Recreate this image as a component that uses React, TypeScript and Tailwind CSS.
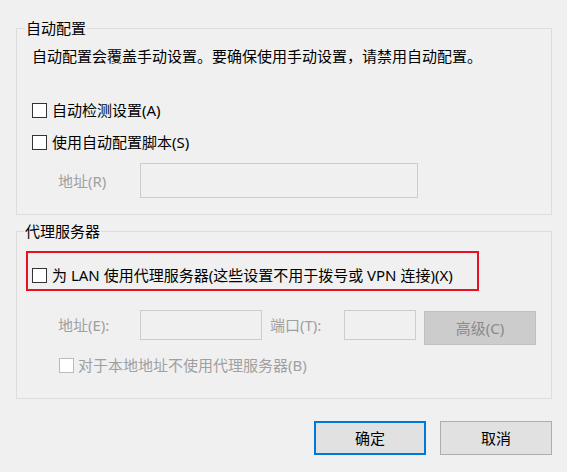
const font = { fontFamily: '"Noto Sans", "Noto Sans CJK SC", sans-serif' };

interface CheckProps {
  label: string;
  disabled?: boolean;
}

const Check = ({ label, disabled }: CheckProps) => (
  <div className="flex items-center h-[20px]">
    <span
      className={
        disabled
          ? "w-[15px] h-[15px] bg-white border border-[#bcbcbc] shrink-0"
          : "w-[15px] h-[15px] bg-white border border-[#333333] shrink-0"
      }
    />
    <span className={disabled ? "ml-[4px] text-[#a0a0a0]" : "ml-[5px] text-black"}>{label}</span>
  </div>
);

export default function App() {
  return (
    <div
      className="w-[567px] h-[472px] bg-[#f0f0f0] pt-[18px] pl-[16px] text-[15px] leading-[20px] text-black overflow-hidden"
      style={font}
    >
      {/* 自动配置 */}
      <fieldset className="w-[536px] border border-[#dcdcdc] pl-[15px] pb-[16px]">
        <legend className="-ml-[7px] px-[1px] leading-[20px]">自动配置</legend>
        <p className="mt-[8px]">自动配置会覆盖手动设置。要确保使用手动设置，请禁用自动配置。</p>
        <div className="mt-[34px]">
          <Check label="自动检测设置(A)" />
        </div>
        <div className="mt-[12px]">
          <Check label="使用自动配置脚本(S)" />
        </div>
        <div className="mt-[11px] flex items-center">
          <span className="ml-[26px] w-[82px] text-[#a0a0a0]">地址(R)</span>
          <div className="w-[278px] h-[35px] border border-[#cccccc] bg-[#f0f0f0]" />
        </div>
      </fieldset>

      {/* 代理服务器 */}
      <fieldset className="mt-[6px] w-[536px] border border-[#dcdcdc] pl-[15px] pb-[23px]">
        <legend className="-ml-[8px] px-[1px] leading-[20px]">代理服务器</legend>
        <div className="mt-[10px] -ml-[6px] w-[453px] h-[40px] border-2 border-[#e81123] pl-[4px] pt-[12px]">
          <Check label="为 LAN 使用代理服务器(这些设置不用于拨号或 VPN 连接)(X)" />
        </div>
        <div className="mt-[19px] flex items-start">
          <span className="ml-[26px] mt-[5px] w-[82px] text-[#a0a0a0]">地址(E):</span>
          <div className="w-[122px] h-[30px] border border-[#cccccc] bg-[#f0f0f0]" />
          <span className="ml-[8px] mt-[5px] w-[74px] text-[#a0a0a0]">端口(T):</span>
          <div className="w-[72px] h-[30px] border border-[#cccccc] bg-[#f0f0f0]" />
          <div className="ml-[8px] mt-[1px] w-[112px] h-[34px] border border-[#bfbfbf] bg-[#cccccc] flex items-center justify-center text-[#8a8a8a]">
            高级(C)
          </div>
        </div>
        <div className="mt-[10px] ml-[27px]">
          <Check label="对于本地地址不使用代理服务器(B)" disabled />
        </div>
      </fieldset>

      {/* buttons */}
      <div className="mt-[22px] w-[536px] flex justify-end gap-[14px]">
        <div className="w-[112px] h-[34px] border-2 border-[#0078d7] bg-[#e1e1e1] flex items-center justify-center">
          确定
        </div>
        <div className="w-[112px] h-[34px] border border-[#adadad] bg-[#e1e1e1] flex items-center justify-center">
          取消
        </div>
      </div>
    </div>
  );
}
